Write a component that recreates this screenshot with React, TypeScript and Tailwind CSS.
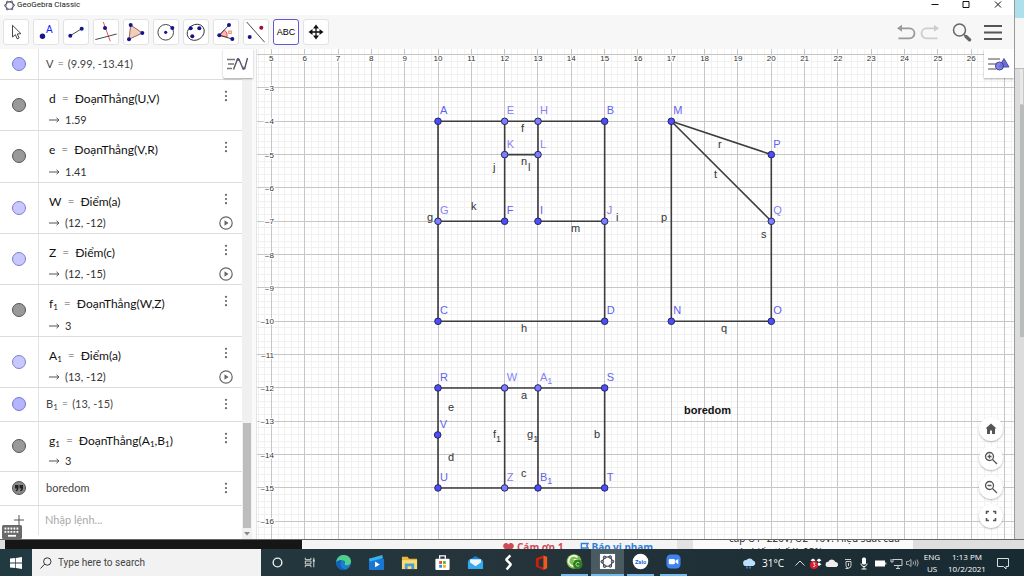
import type { ReactNode } from "react";

/* ---------- Toolbar ---------- */

const NAVY = "#14148c";

function ToolIcon({ children }: { children: ReactNode }) {
  return (
    <svg viewBox="0 0 26 26" className="size-[26px] shrink-0" fill="none" stroke="#333" strokeWidth="0.9">
      {children}
    </svg>
  );
}

function Dot({ x, y, color = NAVY, r = 2 }: { x: number; y: number; color?: string; r?: number }) {
  return <circle cx={x} cy={y} r={r} fill={color} stroke="none" />;
}

const tools: { name: string; icon: ReactNode; active?: boolean }[] = [
  {
    name: "Move",
    icon: <path d="M9.5 6.3V18l2.9-2.3 1.8 4.2 1.9-.9-1.8-4 3.6-.4z" fill="#fff" />,
  },
  {
    name: "Point",
    icon: (
      <>
        <Dot x={9.5} y={17.3} r={2.7} />
        <text x="13" y="14.3" fontSize="10" fill="#1c1cff" stroke="none">A</text>
      </>
    ),
  },
  {
    name: "Segment",
    icon: (
      <>
        <path d="M7.3 16.7 18.7 9.7" />
        <Dot x={7.3} y={16.7} />
        <Dot x={18.7} y={9.7} />
      </>
    ),
  },
  {
    name: "Perpendicular line",
    icon: (
      <>
        <path d="M10.3 3l7 19.3" stroke="#e8404c" />
        <path d="M2.3 20.6l21.4-5.6" />
        <Dot x={12} y={9} />
      </>
    ),
  },
  {
    name: "Polygon",
    icon: (
      <>
        <path d="M7.7 6 19.3 14 6 20.3z" fill="#f3cdbc" stroke="#8a5a4a" />
        <Dot x={7.7} y={6} />
        <Dot x={19.3} y={14} />
        <Dot x={6} y={20.3} />
      </>
    ),
  },
  {
    name: "Circle",
    icon: (
      <>
        <circle cx="12.7" cy="13.3" r="7.8" />
        <Dot x={12.7} y={13.3} r={1.6} />
        <Dot x={19.3} y={9} />
      </>
    ),
  },
  {
    name: "Conic",
    icon: (
      <>
        <ellipse cx="12.7" cy="13.3" rx="9" ry="7.6" transform="rotate(-35 12.7 13.3)" />
        <Dot x={7.7} y={9.3} />
        <Dot x={16.3} y={9.3} />
        <Dot x={9.3} y={17.3} />
      </>
    ),
  },
  {
    name: "Angle",
    icon: (
      <>
        <path d="M6.3 16.3 11.3 11c2.4 1.6 3.2 4 2.7 7z" fill="#ffb9b0" stroke="#e8404c" />
        <path d="M16 6 6.3 16.3 19.3 20" />
        <rect x="15.7" y="12" width="2.6" height="2.6" stroke="#ee8866" fill="#ffe0d0" />
        <Dot x={16} y={6} />
        <Dot x={6.3} y={16.3} />
        <Dot x={19.3} y={20} />
      </>
    ),
  },
  {
    name: "Reflect",
    icon: (
      <>
        <path d="M3.7 3l18 20.3" />
        <Dot x={6.7} y={18} />
        <Dot x={18.3} y={8.7} color="#a01030" />
      </>
    ),
  },
  {
    name: "Text",
    active: true,
    icon: <span className="text-[9px] leading-3 text-black">ABC</span>,
  },
  {
    name: "Move graphics view",
    icon: (
      <>
        <path d="M13 7v12M7 13h12" stroke="#111" strokeWidth="1.3" />
        <path d="M13 5.500l3 4h-6zM13 20.500l3-4h-6zM5.500 13l4-3v6zM20.500 13l-4-3v6z" fill="#111" stroke="none" />
      </>
    ),
  },
];

function GeoGebraMark({ className }: { className: string }) {
  return (
    <svg viewBox="0 0 12 12" className={className} fill="none" stroke="#444458" strokeWidth="1.1" aria-hidden="true">
      <path d="M3.6 2.2 8.3 1.8 10.6 5.6 8.8 9.8 3.4 10 1.4 6z" />
      {[[3.6, 2.3], [8.3, 2], [10.5, 5.8], [8.7, 9.7], [3.5, 9.8], [1.5, 6]].map(([x, y]) => (
        <circle key={`${x}-${y}`} cx={x} cy={y} r="1" fill="#b9b9ee" strokeWidth="0.7" />
      ))}
    </svg>
  );
}

function TitleBar() {
  return (
    <header className="flex h-[15px] shrink-0 items-start bg-white pl-1 font-[Roboto,sans-serif] text-[8px] leading-[10px] text-[#222]">
      <GeoGebraMark className="mr-[2px] size-[11px]" />
      <h1 className="grow">GeoGebra Classic</h1>
      <button aria-label="Minimize" className="flex h-[10px] w-[31px] items-center justify-center">
        <svg viewBox="0 0 8 8" className="size-2" stroke="#111"><path d="M.5 3.500h7" /></svg>
      </button>
      <button aria-label="Maximize" className="flex h-[10px] w-[31px] items-center justify-center">
        <svg viewBox="0 0 8 8" className="size-2" stroke="#111" fill="none"><path d="M1 .5h6v6H1z" /></svg>
      </button>
      <button aria-label="Close" className="flex h-[10px] w-[33px] items-center justify-center">
        <svg viewBox="0 0 8 8" className="size-2" stroke="#111"><path d="M1 .5l6 6M7 .5l-6 6" /></svg>
      </button>
    </header>
  );
}

function Toolbar() {
  return (
    <div className="flex h-[34px] shrink-0 items-center bg-[#f7f7f7] pr-3 pl-[3px]">
      <div className="flex grow gap-1">
        {tools.map((t) => (
          <button
            key={t.name}
            aria-label={t.name}
            className={
              t.active
                ? "flex size-[26px] items-center justify-center rounded-[3px] border border-[#6557d2] bg-white"
                : "flex size-[26px] items-center justify-center rounded-[3px] border border-[#e2e2e2] bg-white"
            }
          >
            {t.name === "Text" ? t.icon : <ToolIcon>{t.icon}</ToolIcon>}
          </button>
        ))}
      </div>
      <button aria-label="Undo" className="mr-1">
        <svg viewBox="0 0 20 18" className="h-[18px] w-5" fill="none" stroke="#9a9a9a" strokeWidth="1.8">
          <path d="M5 5.3h8.5a4.800 4.800 0 0 1 0 10H2.500" />
          <path d="M1 5.300 6 1.800v7z" fill="#9a9a9a" stroke="none" />
        </svg>
      </button>
      <button aria-label="Redo" className="mr-3">
        <svg viewBox="0 0 20 18" className="h-[18px] w-5" fill="none" stroke="#cdcdcd" strokeWidth="1.8">
          <path d="M15 5.300H6.500a4.800 4.800 0 0 0 0 10h11" />
          <path d="M19 5.300 14 1.800v7z" fill="#cdcdcd" stroke="none" />
        </svg>
      </button>
      <button aria-label="Search" className="mr-3">
        <svg viewBox="0 0 20 20" className="size-5" fill="none" stroke="#666">
          <circle cx="7.5" cy="8" r="6" strokeWidth="1.5" />
          <path d="M12 12.500l2 2" strokeWidth="1.5" />
          <path d="M14 14.500l3.500 3.300" strokeWidth="3.400" strokeLinecap="round" />
        </svg>
      </button>
      <button aria-label="Menu">
        <svg viewBox="0 0 18 18" className="size-[18px]" stroke="#555" strokeWidth="2">
          <path d="M0 3h18M0 9.500h18M0 16h18" />
        </svg>
      </button>
    </div>
  );
}

/* ---------- Algebra view ---------- */

type Item = { name: string; sub?: string; def: ReactNode; value?: string; tone: "point" | "free" | "segment" | "text"; play?: boolean };

const items: Item[] = [
  { name: "V", def: "(9.99, -13.41)", tone: "free" },
  { name: "d", def: "ĐoạnThẳng(U,V)", value: "1.59", tone: "segment" },
  { name: "e", def: "ĐoạnThẳng(V,R)", value: "1.41", tone: "segment" },
  { name: "W", def: "Điểm(a)", value: "(12, -12)", tone: "point", play: true },
  { name: "Z", def: "Điểm(c)", value: "(12, -15)", tone: "point", play: true },
  { name: "f", sub: "1", def: "ĐoạnThẳng(W,Z)", value: "3", tone: "segment" },
  { name: "A", sub: "1", def: "Điểm(a)", value: "(13, -12)", tone: "point", play: true },
  { name: "B", sub: "1", def: "(13, -15)", tone: "free" },
  {
    name: "g",
    sub: "1",
    def: <>ĐoạnThẳng(A<Sub>1</Sub>,B<Sub>1</Sub>)</>,
    value: "3",
    tone: "segment",
  },
  { name: "", def: "boredom", tone: "text" },
];

const marble = {
  free: "bg-[#b4b4ff] border-[#7777cc]",
  point: "bg-[#c8c8ff] border-[#7f7fc8]",
  segment: "bg-[#999] border-[#555]",
  text: "bg-[#888] border-[#555]",
};

function Sub({ children }: { children: ReactNode }) {
  return <sub className="bottom-[-2px] text-[8px]">{children}</sub>;
}

function KebabIcon() {
  return (
    <svg viewBox="0 0 4 12" className="h-3 w-1" fill="#666">
      <circle cx="2" cy="1.8" r="1.1" />
      <circle cx="2" cy="6" r="1.1" />
      <circle cx="2" cy="10.2" r="1.1" />
    </svg>
  );
}

function AlgebraRow({ item, first }: { item: Item; first: boolean }) {
  const tall = item.value !== undefined;
  return (
    <li className="flex min-h-0 border-b border-[#dcdcdc]">
      <div className="flex w-[39px] shrink-0 items-center justify-center border-r border-[#e4e4e4] pr-px">
        <button
          aria-label={`Show or hide ${item.name || "text"}`}
          className={`flex size-[14px] items-center justify-center rounded-full border ${marble[item.tone]}`}
        >
          {item.tone === "text" && (
            <svg viewBox="0 0 10 8" className="h-2 w-2.5" fill="#222">
              <path d="M1 1h3.500v3c0 1.800-1 3-2.500 3.300L1.600 6.300C2.400 6 2.800 5.400 2.800 4.500H1zM5.500 1H9v3c0 1.800-1 3-2.500 3.300L6.100 6.300c.8-.3 1.200-.9 1.200-1.800H5.500z" />
            </svg>
          )}
        </button>
      </div>
      {tall ? (
        <div className="flex min-w-0 grow flex-col justify-between pt-[11px] pb-1 pl-[10px] whitespace-nowrap">
          <p className="text-[12px] leading-4 text-[#111]">
            {item.name}
            {item.sub && <Sub>{item.sub}</Sub>}
            <span className="mx-1.5 font-light text-[#555]">=</span>
            {item.def}
          </p>
          <p className="flex items-center gap-[5px] text-[11px] leading-3 text-[#333]">
            <svg viewBox="0 0 11 6" className="h-1.5 w-[11px]" fill="none" stroke="#555">
              <path d="M0 3h10M7.500 .8 10 3 7.500 5.200" />
            </svg>
            {item.value}
          </p>
        </div>
      ) : (
        <p className="min-w-0 grow self-center pb-px pl-[7px] text-[11px] leading-4 whitespace-nowrap text-[#444]">
          {item.name}
          {item.sub && <Sub>{item.sub}</Sub>}
          {item.name && <span className="mx-1 font-light text-[#666]">=</span>}
          {item.def}
        </p>
      )}
      {!first && (
        <div
          className={
            tall
              ? "flex w-[33px] shrink-0 flex-col items-center justify-between pt-[10px] pb-[3px]"
              : "flex w-[33px] shrink-0 items-center justify-center"
          }
        >
          <button aria-label="More"><KebabIcon /></button>
          {item.play && (
            <button aria-label="Play">
              <svg viewBox="0 0 14 14" className="size-[14px]" fill="none" stroke="#666">
                <circle cx="7" cy="7" r="6.2" strokeWidth="1.2" />
                <path d="M5.500 4.200v5.600L9.500 7z" fill="#666" stroke="none" />
              </svg>
            </button>
          )}
        </div>
      )}
    </li>
  );
}

function AlgebraView() {
  return (
    <section aria-label="Algebra" className="relative flex w-[257px] shrink-0 bg-white">
      <ul className="grid min-w-0 grow grid-rows-[31px_repeat(6,minmax(0,1fr))_34px_50px_34px_33px] font-[Lato,sans-serif]">
        {items.map((item, i) => (
          <AlgebraRow key={`${item.name}${item.sub ?? ""}`} item={item} first={i === 0} />
        ))}
        <li className="flex pb-1">
          <div className="flex w-[39px] shrink-0 items-center justify-center border-r border-[#e4e4e4] pr-px">
            <svg viewBox="0 0 10 10" className="size-2.5" stroke="#555"><path d="M0 5h10M5 0v10" /></svg>
          </div>
          <input
            aria-label="Nhập lệnh"
            placeholder="Nhập lệnh..."
            className="min-w-0 grow pl-[6px] text-[11px] outline-none placeholder:text-[#aaa]"
          />
        </li>
      </ul>
      <div className="flex w-[10px] shrink-0 flex-col bg-[#f0f0f0]">
        <div className="grow" />
        <div className="mx-px h-[105px] bg-[#bdbdbd]" />
        <div className="flex h-[11px] items-center justify-center">
          <svg viewBox="0 0 6 4" className="h-1 w-1.5" fill="#888"><path d="M0 0h6L3 3.500z" /></svg>
        </div>
      </div>
      <div className="w-[5px] shrink-0 border-r border-[#e4e4e4] bg-[#fafafa]" />
      <button
        aria-label="Toggle style bar"
        className="absolute top-0 right-1 flex h-[29px] w-[30px] items-center justify-center rounded-bl-[2px] bg-white shadow-[0_1px_2px_#0005]"
      >
        <svg viewBox="0 0 22 14" className="h-[14px] w-[22px]" fill="none" stroke="#777">
          <path d="M0 2.500h8M1 7h6M0 11.500h5" strokeWidth="1.3" />
          <path d="M6.500 12.500 10.500 2l1.600.5 4 9.500 1.600-.5L20.500 1" stroke="#555566" strokeWidth="1.4" />
          <circle cx="11.2" cy="2.5" r="1.1" stroke="#5b5b88" />
          <circle cx="16.8" cy="11.2" r="1.1" stroke="#5b5b88" />
        </svg>
      </button>
      <button aria-label="Keyboard" className="absolute bottom-0 left-[2px]">
        <svg viewBox="0 0 20 14" className="h-[14px] w-5">
          <rect width="20" height="14" rx="1.5" fill="#6a6a6a" />
          <path d="M2.500 3.500h15M2.500 6.800h15" stroke="#fff" strokeWidth="1.8" strokeDasharray="1.8 1.2" />
          <path d="M6 10.800h8" stroke="#fff" strokeWidth="1.8" />
        </svg>
      </button>
    </section>
  );
}

/* ---------- Graphics view ---------- */

const UNIT = 33.33;
const X = (u: number) => 181 + (u - 10) * UNIT;
const Y = (v: number) => 72.3 + (-4 - v) * UNIT;
const snap = (n: number) => Math.floor(n) + 0.5;

type Pt = { id: string; sub?: string; x: number; y: number; light?: boolean };

const points: Pt[] = [
  { id: "A", x: 10, y: -4 },
  { id: "E", x: 12, y: -4, light: true },
  { id: "H", x: 13, y: -4, light: true },
  { id: "B", x: 15, y: -4 },
  { id: "K", x: 12, y: -5, light: true },
  { id: "L", x: 13, y: -5, light: true },
  { id: "G", x: 10, y: -7, light: true },
  { id: "F", x: 12, y: -7 },
  { id: "I", x: 13, y: -7 },
  { id: "J", x: 15, y: -7, light: true },
  { id: "C", x: 10, y: -10 },
  { id: "D", x: 15, y: -10 },
  { id: "M", x: 17, y: -4 },
  { id: "P", x: 20, y: -5 },
  { id: "Q", x: 20, y: -7, light: true },
  { id: "N", x: 17, y: -10 },
  { id: "O", x: 20, y: -10 },
  { id: "R", x: 10, y: -12 },
  { id: "W", x: 12, y: -12, light: true },
  { id: "A", sub: "1", x: 13, y: -12, light: true },
  { id: "S", x: 15, y: -12 },
  { id: "V", x: 9.99, y: -13.41 },
  { id: "U", x: 10, y: -15 },
  { id: "Z", x: 12, y: -15, light: true },
  { id: "B", sub: "1", x: 13, y: -15 },
  { id: "T", x: 15, y: -15 },
];

const segments = [
  [10, -4, 15, -4], [10, -4, 10, -10], [15, -4, 15, -10], [10, -10, 15, -10],
  [12, -4, 12, -7], [13, -4, 13, -7], [12, -5, 13, -5], [10, -7, 12, -7], [13, -7, 15, -7],
  [17, -4, 17, -10], [17, -10, 20, -10], [20, -5, 20, -10], [17, -4, 20, -5], [17, -4, 20, -7],
  [10, -12, 15, -12], [10, -12, 10, -15], [10, -15, 15, -15], [15, -12, 15, -15],
  [12, -12, 12, -15], [13, -12, 13, -15],
];

const segmentLabels: [string, number, number, string?][] = [
  ["f", 264, 83], ["n", 264, 116], ["l", 271, 122], ["j", 236, 122], ["k", 214, 161],
  ["g", 170, 172], ["i", 359, 172], ["m", 314, 183], ["h", 264, 283], ["a", 264, 350],
  ["e", 191, 362], ["d", 191, 412], ["c", 264, 428], ["f", 236, 389, "1"], ["g", 270, 389, "1"],
  ["b", 337, 389], ["r", 461, 99], ["t", 457, 129], ["p", 404, 172], ["s", 504, 189], ["q", 464, 283],
];

const range = (from: number, to: number) => Array.from({ length: to - from + 1 }, (_, i) => from + i);

function Plot() {
  return (
    <svg className="absolute inset-0 size-full" role="img" aria-label="Graphics view">
      <g stroke="#f1f1f1">
        {range(23, 140).map((n) => (
          <line key={`x${n}`} x1={snap(X(n / 5))} x2={snap(X(n / 5))} y1="0" y2="100%" />
        ))}
        {range(8, 90).map((n) => (
          <line key={`y${n}`} y1={snap(Y(-n / 5))} y2={snap(Y(-n / 5))} x1="0" x2="100%" />
        ))}
      </g>
      <g stroke="#c6c6c6">
        {range(5, 27).map((n) => (
          <line key={`x${n}`} x1={snap(X(n))} x2={snap(X(n))} y1="0" y2="100%" />
        ))}
        {range(2, 17).map((n) => (
          <line key={`y${n}`} y1={snap(Y(-n))} y2={snap(Y(-n))} x1="0" x2="100%" />
        ))}
      </g>
      <g fontSize="8" fill="#333" textAnchor="middle" stroke="#fff" strokeWidth="2" paintOrder="stroke">
        {range(5, 26).map((n) => (
          <text key={`x${n}`} x={X(n)} y="12">{n}</text>
        ))}
      </g>
      <g fontSize="8" fill="#333" textAnchor="end" stroke="#fff" strokeWidth="2" paintOrder="stroke">
        {range(3, 16).map((n) => (
          <text key={`y${n}`} x="17" y={Y(-n) + 3}>–{n}</text>
        ))}
      </g>
      <g stroke="#3c3c3c" strokeWidth="1.6">
        {segments.map(([a, b, c, d]) => (
          <line key={`${a},${b},${c},${d}`} x1={X(a)} y1={Y(b)} x2={X(c)} y2={Y(d)} />
        ))}
      </g>
      {points.map((p) => (
        <g key={p.id + (p.sub ?? "")}>
          <circle cx={X(p.x)} cy={Y(p.y)} r="3.3" fill={p.light ? "#7d7dff" : "#4d4dff"} stroke="#26265a" />
          <text x={X(p.x) + 2} y={Y(p.y) - 7} fontSize="11" fill={p.light ? "#8383f5" : "#6262f0"}>
            {p.id}
            {p.sub && <tspan dy="3" fontSize="9">{p.sub}</tspan>}
          </text>
        </g>
      ))}
      <g fontSize="11" fill="#333">
        {segmentLabels.map(([t, x, y, sub]) => (
          <text key={`${t}${x}`} x={x} y={y}>
            {t}
            {sub && <tspan dy="4" fontSize="9">{sub}</tspan>}
          </text>
        ))}
        <text x="427" y="365" fontWeight="bold" fill="#111">boredom</text>
      </g>
    </svg>
  );
}

const viewButtons = [
  { name: "Home", d: <path d="M7 1.500 1.500 6.500H3v5.500h3V8.500h2V12h3V6.500h1.500z" fill="#555" stroke="none" /> },
  { name: "Zoom in", d: <><circle cx="5.5" cy="5.5" r="4" /><path d="M8.500 8.500 13 13M3.500 5.500h4M5.500 3.500v4" /></> },
  { name: "Zoom out", d: <><circle cx="5.5" cy="5.5" r="4" /><path d="M8.500 8.500 13 13M3.500 5.500h4" /></> },
  { name: "Full screen", d: <path d="M2.500 5V2.500H5M9 2.500h2.500V5M11.500 9v2.500H9M5 11.500H2.500V9" strokeWidth="1.6" /> },
];

function GraphicsView() {
  return (
    <section aria-label="Graphics" className="relative min-w-0 grow overflow-hidden bg-white">
      <Plot />
      <button
        aria-label="Graphics style bar"
        className="absolute top-0 right-0 flex h-[29px] w-[30px] items-center justify-center bg-white shadow-[0_1px_2px_#0005]"
      >
        <svg viewBox="0 0 22 16" className="h-4 w-[22px]" fill="none">
          <path d="M0 3h12M0 8h8M0 13h8" stroke="#888" strokeWidth="1.4" />
          <path d="M16 2.500l5 8.500H11z" fill="#6f6fd6" stroke="#5050a8" />
          <circle cx="11.5" cy="10" r="4" fill="#7272dd" fillOpacity="0.85" stroke="#3f3fa0" />
        </svg>
      </button>
      <div className="absolute right-[11px] bottom-[11px] flex flex-col gap-[5px]">
        {viewButtons.map((b) => (
          <button
            key={b.name}
            aria-label={b.name}
            className="flex size-6 items-center justify-center rounded-full bg-white shadow-[0_1px_2px_#0004]"
          >
            <svg viewBox="0 0 14 14" className="size-[14px]" fill="none" stroke="#555" strokeWidth="1.3">{b.d}</svg>
          </button>
        ))}
      </div>
    </section>
  );
}

/* ---------- Page behind the window ---------- */

function PageEdgeRight() {
  return (
    <div className="flex w-[10px] shrink-0 flex-col border-l border-[#999] bg-[#dcdcdc]">
      <div className="h-[18px] bg-[#ace0ec]" />
      <div className="h-[51px] border-b border-[#bbb] bg-[#f6f6f6]" />
      <div className="ml-[5px] h-[36px] border-r border-b border-[#c8c8c8] bg-[#e8e8e8]" />
      <div className="ml-[5px] h-[232px] bg-[#b9bcbd]" />
    </div>
  );
}

function PageEdgeBottom() {
  return (
    <div className="flex h-[10px] shrink-0 overflow-hidden border-t border-[#666] bg-[#f4f4f4] font-['Open_Sans',sans-serif]">
      <div className="w-[5px] shrink-0 bg-[#ddd]" />
      <div className="w-[297px] shrink-0 bg-[#161616]" />
      <div className="flex w-[375px] shrink-0 items-start gap-4 pt-px pl-[201px] text-[10px] leading-[13px] font-bold whitespace-nowrap">
        <span className="flex gap-[3px] text-[#cf4a55]">
          <svg viewBox="0 0 12 12" className="mt-px size-[11px]" fill="currentColor">
            <path d="M6 11.500 1 6.500C-1 4 1 1 3.300 1 4.600 1 5.500 1.700 6 2.600 6.500 1.700 7.400 1 8.700 1 11 1 13 4 11 6.500z" />
          </svg>
          Cám ơn 1
        </span>
        <span className="flex gap-[3px] text-[#2f7fd6]">
          <svg viewBox="0 0 10 12" className="mt-px h-[11px] w-[9px]" fill="none" stroke="currentColor" strokeWidth="1.5">
            <path d="M1.500 12V1.500H9L7.500 4 9 6.500H1.500" />
          </svg>
          Báo vi phạm
        </span>
      </div>
      <div className="w-4 shrink-0 bg-[#e2e2e2]" />
      <div className="w-[220px] shrink-0 bg-[#fafafa] pl-9 text-[10px] leading-[14px] whitespace-nowrap text-[#222]">
        <p className="-mt-[9px]">cấp U1=220V, U2=10V. Hiệu suất của</p>
        <p>máy biến thế là 95%.</p>
      </div>
      <div className="grow bg-[#dedede]" />
    </div>
  );
}

/* ---------- Taskbar ---------- */

const apps: { name: string; open?: boolean; active?: boolean; icon: ReactNode }[] = [
  { name: "Cortana", icon: <circle cx="9" cy="9" r="4.6" fill="none" stroke="#eee" strokeWidth="1.5" /> },
  {
    name: "Task view",
    icon: (
      <g fill="none" stroke="#ddd">
        <path d="M3.500 4v2h6V4M3.500 14v-2h6v2M3.500 7.500h6v3h-6zM12.500 4v10" />
        <path d="M12.500 6v2" strokeWidth="2" />
      </g>
    ),
  },
  {
    name: "Edge",
    icon: (
      <>
        <circle cx="9" cy="9" r="8" fill="#1b7fd0" />
        <path d="M1.500 8C2.500 3 6 1 9.500 1 14 1 17 4.500 17 8c0 2.500-2 4-4.500 4-2 0-2.500-1-2-2 .8-1.500 0-3.500-2.500-3.500C5 6.500 3 7 1.500 8z" fill="#4fd08a" />
        <path d="M6 9c-1 4 2 7.500 6.500 7C8 18.500 2 16 1.200 10c.5-3 3.300-4 6.300-3.300C6.800 7.200 6.200 8 6 9z" fill="#1260b4" />
      </>
    ),
  },
  {
    name: "Movies",
    icon: (
      <>
        <rect x="1" y="5" width="16" height="12" rx="1" fill="#1a76d2" />
        <path d="M1 5 15 1l1 3.500L2 8z" fill="#35b3ee" />
        <path d="M7.500 8v6l5-3z" fill="#fff" />
      </>
    ),
  },
  {
    name: "File explorer",
    icon: (
      <>
        <path d="M1 3h6l1.500 2H17v11H1z" fill="#e8b93a" />
        <path d="M1 6.500h16V16H1z" fill="#fbdc75" />
        <path d="M4 10h10v6h-3v-3H7v3H4z" fill="#4a9fd8" />
      </>
    ),
  },
  {
    name: "Store",
    icon: (
      <>
        <path d="M6 5V2h6v3" fill="none" stroke="#fff" strokeWidth="1.4" />
        <rect x="1.5" y="5" width="15" height="12" rx="1" fill="#fff" />
        <path d="M5.500 7.500h3v3h-3z" fill="#e8492f" />
        <path d="M9.500 7.500h3v3h-3z" fill="#69b42f" />
        <path d="M5.500 11.500h3v3h-3z" fill="#2a8fdc" />
        <path d="M9.500 11.500h3v3h-3z" fill="#f2b01e" />
      </>
    ),
  },
  {
    name: "Mail",
    icon: (
      <>
        <path d="M1 7 9 2l8 5v9H1z" fill="#1580d4" />
        <path d="M3 5.500h12V10l-6 3.500L3 10z" fill="#e9f5ff" />
        <path d="M1 7.500 9 13l8-5.500V16H1z" fill="#35a8ee" />
      </>
    ),
  },
  {
    name: "Notes",
    icon: <path d="M11 1.500 6.500 6l5 5L7 16.500" fill="none" stroke="#fff" strokeWidth="2.6" strokeLinejoin="bevel" />,
  },
  {
    name: "Office",
    icon: (
      <>
        <path d="M3 4.500 11 1.500v3L6 6v7l5 1v3l-8-3.500z" fill="#c8200c" />
        <path d="M11 1.500 15 3v12l-4 2z" fill="#ee5a22" />
      </>
    ),
  },
  {
    name: "Browser",
    open: true,
    icon: (
      <>
        <circle cx="8.5" cy="9" r="7.8" fill="#7fbf4b" />
        <path d="M12 4.500a5.500 5.500 0 1 0-4 9.500" fill="none" stroke="#eef7e4" strokeWidth="2" />
        <path d="M8 7h5M8 9h4" stroke="#fff" />
        <circle cx="12.5" cy="12" r="5" fill="#2e7d22" />
        <path d="M14 10.600a2 2 0 1 0 0 2.800" fill="none" stroke="#bfe6a8" />
      </>
    ),
  },
  {
    name: "GeoGebra",
    open: true,
    active: true,
    icon: (
      <>
        <rect x="1" y="1" width="16" height="16" fill="#fff" />
        <path d="M6 4.500 11.800 4 14.500 9 12.200 13.800 6 14 3.300 9.200z" fill="none" stroke="#333" strokeWidth="1.2" />
        <g fill="#9999e8" stroke="#222" strokeWidth="0.8">
          <circle cx="6" cy="4.6" r="1.4" />
          <circle cx="11.8" cy="4.2" r="1.4" />
          <circle cx="14.4" cy="9" r="1.4" />
          <circle cx="12" cy="13.8" r="1.4" />
          <circle cx="6" cy="14" r="1.4" />
          <circle cx="3.4" cy="9.2" r="1.4" />
        </g>
      </>
    ),
  },
  {
    name: "Zalo",
    open: true,
    icon: (
      <>
        <circle cx="9" cy="9" r="8.2" fill="#fff" />
        <text x="9" y="11.3" textAnchor="middle" fontSize="6" fontWeight="bold" fill="#1768d8">Zalo</text>
      </>
    ),
  },
  {
    name: "Zoom",
    open: true,
    icon: (
      <>
        <rect x="1.5" y="1.5" width="15" height="15" rx="4.5" fill="#3f83f0" />
        <rect x="4" y="6.3" width="6.5" height="5.5" rx="1.3" fill="#fff" />
        <path d="M11 8.300 14 6.400v5.400l-3-1.900z" fill="#fff" />
      </>
    ),
  },
];

const tray: { name: string; icon: ReactNode }[] = [
  { name: "Show hidden icons", icon: <path d="M2.500 9.500 7 5l4.500 4.500" stroke="#ddd" fill="none" /> },
  {
    name: "Dropbox",
    icon: (
      <>
        <path d="M4 2.500l2.500 1.700L4 6 1.500 4.200zM10 2.500l2.500 1.700L10 6 7.500 4.200zM10 6.500l2.500 1.700L10 10 7.500 8.200z" fill="#fff" />
        <circle cx="5" cy="9" r="4" fill="#d8202f" />
        <path d="M4 7h2L5 8.500c1.500 0 1.500 2.500-.9 2" stroke="#fff" strokeWidth="0.8" fill="none" />
      </>
    ),
  },
  { name: "OneDrive", icon: <path d="M3 11a2.600 2.600 0 0 1 .3-5.200A3.800 3.800 0 0 1 10.400 6 2.600 2.600 0 0 1 11.500 11z" fill="#eee" /> },
  { name: "Safely remove", icon: <path d="M4 3.500h6M5 5.500h5v4a2.500 2.500 0 0 1-5 0zM7.500 7v3M4.500 12.500h3" stroke="#ccc" fill="none" /> },
  { name: "Microphone", icon: <><rect x="5" y="1.5" width="4" height="7" rx="1.5" fill="#fff" /><path d="M4 7.500c0 4 6 4 6 0M7 10.500V13M4.500 13h5" stroke="#fff" fill="none" /></> },
  { name: "Battery", icon: <><rect x="2.5" y="5" width="9" height="5" fill="#fff" stroke="#fff" /><path d="M12.800 6.500v2" stroke="#fff" /></> },
  { name: "Network", icon: <path d="M3.500 3.500H13v6H5M7 12.500h4M9 9.500v3M2 3v3h2V3" stroke="#ccc" fill="none" /> },
  { name: "Volume", icon: <path d="M1.500 5.500H3.500L6 3.500v7L3.500 8.500h-2zM8 5.500q1 1.500 0 3M10 4.500q1.600 2.500 0 5M12 3.500q2.400 3.500 0 7" stroke="#ccc" strokeWidth="0.8" fill="none" /> },
];

function Taskbar() {
  return (
    <footer className="flex h-[27px] shrink-0 bg-linear-to-r from-[#213a42] via-[#25343a] to-[#182a32] font-[Roboto,sans-serif] text-white">
      <button aria-label="Start" className="flex w-8 shrink-0 items-center justify-center">
        <svg viewBox="0 0 12 12" className="size-3" fill="#fff">
          <path d="M0 1.600 5.300 1v4.600H0zM6 .9 12 0v5.600H6zM0 6.400h5.300V11L0 10.400zM6 6.400h6V12l-6-.9z" />
        </svg>
      </button>
      <label className="flex w-[229px] shrink-0 items-center gap-[6px] bg-[#f2f2f2] pl-2">
        <svg viewBox="0 0 12 12" className="size-3 shrink-0" fill="none" stroke="#333">
          <circle cx="7.3" cy="4.5" r="3.7" />
          <path d="M4.600 7.200.5 11.500" />
        </svg>
        <input
          aria-label="Type here to search"
          placeholder="Type here to search"
          className="min-w-0 grow text-[10px] outline-none placeholder:text-[#444]"
        />
      </label>
      <nav aria-label="Apps" className="flex shrink-0">
        {apps.map((a) => (
          <button
            key={a.name}
            aria-label={a.name}
            className={
              a.active
                ? "flex w-[33px] flex-col items-center bg-[#4a5a61]"
                : "flex w-[33px] flex-col items-center"
            }
          >
            <span className="flex grow items-center">
              <svg viewBox="0 0 18 18" className="size-[17px]">{a.icon}</svg>
            </span>
            {a.open && <span className={a.active ? "h-[2px] w-full bg-[#76b9ed]" : "h-[2px] w-[27px] bg-[#76b9ed]"} />}
          </button>
        ))}
      </nav>
      <div className="flex grow items-center justify-end pr-2 font-['Open_Sans',sans-serif] leading-3">
        <button className="mr-2 flex items-center gap-[6px] text-[10px]">
          <svg viewBox="0 0 14 12" className="h-3 w-[14px]">
            <path d="M4 9a3 3 0 0 1 .3-6A4 4 0 0 1 11 3.500 2.800 2.800 0 0 1 11 9z" fill="#bfe0fa" />
            <path d="M5 9.500v2M8 9.500v2" stroke="#4a9be8" strokeWidth="1.4" />
          </svg>
          31°C
        </button>
        {tray.map((t) => (
          <button key={t.name} aria-label={t.name} className="flex w-4 justify-center">
            <svg viewBox="0 0 14 14" className="size-[14px]">{t.icon}</svg>
          </button>
        ))}
        <button className="w-6 text-center text-[8px]">ENG<br />US</button>
        <button className="w-[46px] text-center text-[8px] whitespace-nowrap">1:13 PM<br />10/2/2021</button>
        <button aria-label="Notifications" className="flex w-[26px] justify-center">
          <svg viewBox="0 0 12 12" className="size-3" fill="none" stroke="#ddd"><path d="M.5 1.500h11v8H9v2.500L6.500 9.500h-6z" /></svg>
        </button>
      </div>
    </footer>
  );
}

export default function App() {
  return (
    <div className="flex h-screen flex-col overflow-hidden bg-[#dcdcdc] font-['Liberation_Sans',sans-serif]">
      <div className="flex min-h-0 grow">
        <main className="flex min-w-0 grow flex-col bg-white">
          <TitleBar />
          <Toolbar />
          <div className="flex min-h-0 grow">
            <AlgebraView />
            <GraphicsView />
          </div>
        </main>
        <PageEdgeRight />
      </div>
      <PageEdgeBottom />
      <Taskbar />
    </div>
  );
}
